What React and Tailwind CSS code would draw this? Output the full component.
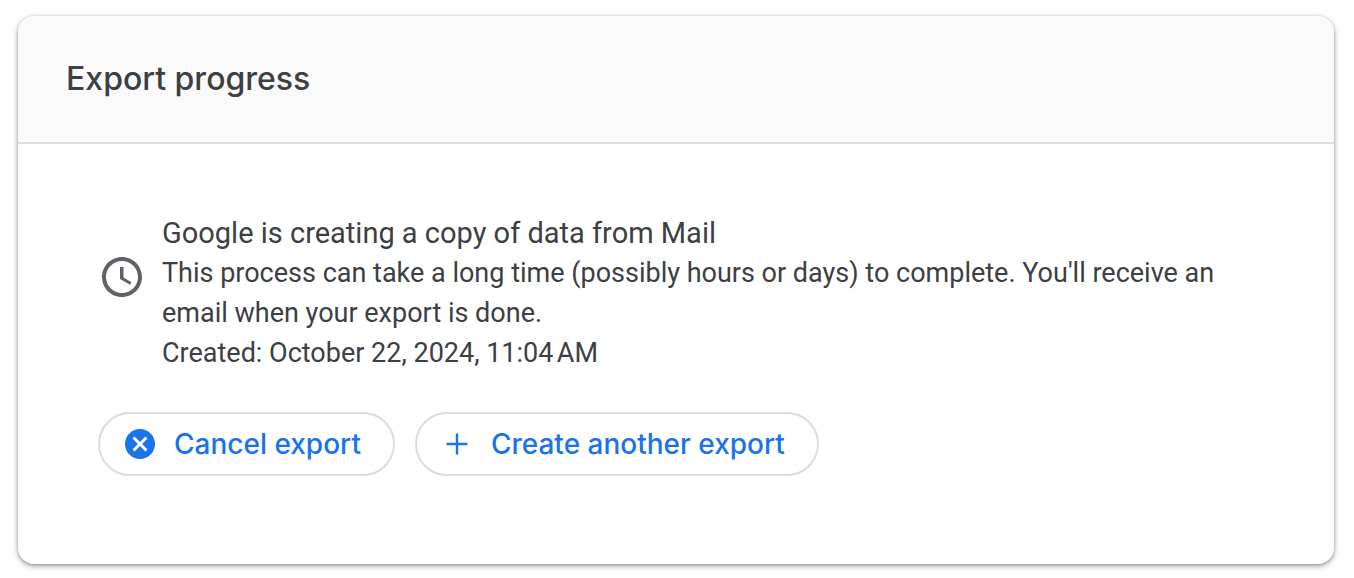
export default function App() {
  const button =
    "flex h-16 items-center gap-4 rounded-full border-2 border-[#dadce0] bg-white pr-8 pl-[22px] font-['Inter',sans-serif] text-[28px] font-medium text-[#1a73e8]";
  return (
    <main className="min-h-screen bg-white py-4 pr-5 pl-[18px] font-['Roboto',sans-serif] text-[#3c4043]">
      <section className="overflow-hidden rounded-2xl bg-white shadow-[0_2px_6px_rgba(60,64,67,0.4),0_1px_3px_rgba(60,64,67,0.35)]">
        <header className="border-b-2 border-[#dadce0] bg-[#fafafa] px-12 py-[42px]">
          <h1 className="font-['Inter',sans-serif] text-[32px] leading-[42px] font-medium">Export progress</h1>
        </header>
        <div className="px-20 pt-[69px] pb-[88px]">
          <div className="flex items-start gap-4">
            <svg viewBox="0 0 24 24" className="mt-10 size-12 shrink-0 fill-[#5f6368]" aria-hidden="true">
              <path d="M11.99 2C6.47 2 2 6.48 2 12s4.47 10 9.99 10C17.52 22 22 17.52 22 12S17.52 2 11.99 2zM12 20c-4.42 0-8-3.58-8-8s3.58-8 8-8 8 3.58 8 8-3.58 8-8 8zm.75-13H11v6l5 2.9.75-1.3-4-2.4z" />
            </svg>
            <div className="text-[27px] leading-10">
              <h2 className="text-[29px]">Google is creating a copy of data from Mail</h2>
              <p>This process can take a long time (possibly hours or days) to complete. You'll receive an email when your export is done.</p>
              <p>Created: October 22, 2024, 11:04{"\u202f"}AM</p>
            </div>
          </div>
          <div className="mt-[39px] flex flex-wrap gap-5">
            <button type="button" className={button}>
              <svg viewBox="0 0 24 24" className="size-9 fill-current" aria-hidden="true">
                <path d="M12 2C6.47 2 2 6.47 2 12s4.47 10 10 10 10-4.47 10-10S17.53 2 12 2zm5 13.59L15.59 17 12 13.41 8.41 17 7 15.59 10.59 12 7 8.41 8.41 7 12 10.59 15.59 7 17 8.41 13.41 12 17 15.59z" />
              </svg>
              Cancel export
            </button>
            <button type="button" className={button}>
              <svg viewBox="0 0 24 24" className="size-9 fill-current" aria-hidden="true">
                <path d="M19 12.8h-6.2V19h-1.6v-6.2H5v-1.6h6.2V5h1.6v6.2H19z" />
              </svg>
              Create another export
            </button>
          </div>
        </div>
      </section>
    </main>
  );
}
